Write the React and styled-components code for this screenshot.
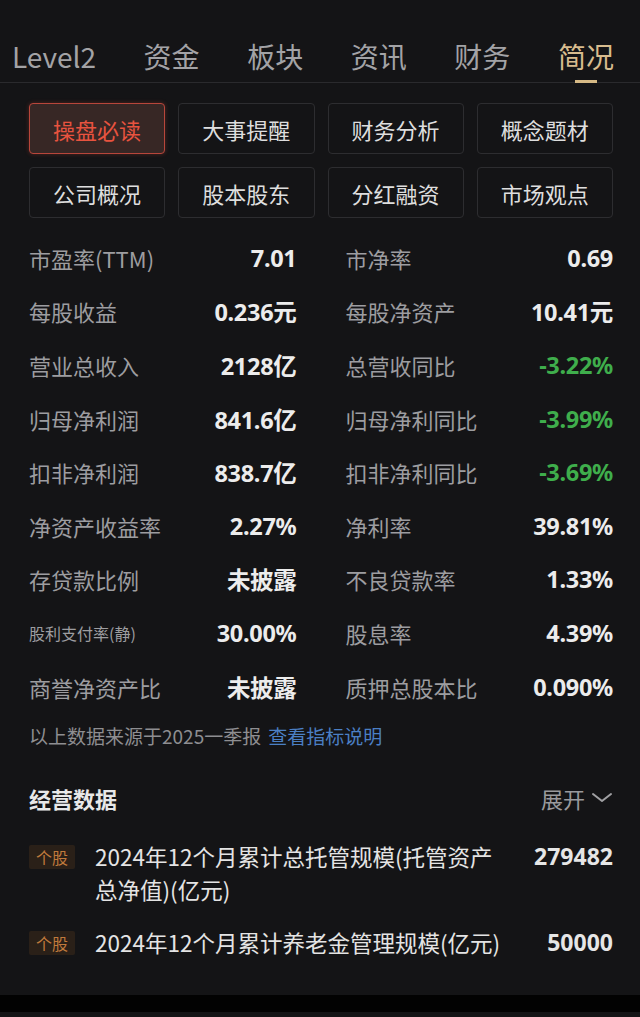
import styled, { createGlobalStyle } from "styled-components";

const Global = createGlobalStyle`
    html, body {
        margin: 0;
        padding: 0;
        background: #141416;
    }
    body {
        font-family: "Noto Sans CJK SC", "Noto Sans", sans-serif;
        color: #e6e6e6;
    }
`;

const Page = styled.div`
    width: 640px;
    height: 1017px;
    background: #141416;
    display: flex;
    flex-direction: column;
    overflow: hidden;
`;

const Tabs = styled.div`
    height: 83px;
    padding: 0 26px 0 12px;
    display: flex;
    justify-content: space-between;
    align-items: flex-start;
    border-bottom: 1px solid #2a2a2d;
    box-sizing: border-box;
`;

const Tab = styled.div`
    position: relative;
    height: 83px;
    padding-top: 37px;
    box-sizing: border-box;
    font-size: 28px;
    line-height: 38px;
    color: ${(p) => (p.$active ? "#d8bc8e" : "#a3a3a6")};

    &::after {
        content: "";
        display: ${(p) => (p.$active ? "block" : "none")};
        position: absolute;
        left: 50%;
        bottom: 0;
        width: 22px;
        height: 3px;
        margin-left: -11px;
        background: #d6b985;
    }
`;

const Body = styled.div`
    padding: 20px 27px 0 29px;
    display: flex;
    flex-direction: column;
    flex: 1;
`;

const Buttons = styled.div`
    display: grid;
    grid-template-columns: repeat(4, 1fr);
    gap: 13px 13px;
`;

const Btn = styled.div`
    height: 51px;
    box-sizing: border-box;
    border-radius: 4px;
    border: 1px solid ${(p) => (p.$active ? "#b8463b" : "#2d2d30")};
    background: ${(p) => (p.$active ? "#372725" : "transparent")};
    color: ${(p) => (p.$active ? "#e8533f" : "#dedede")};
    box-shadow: ${(p) => (p.$active ? "0 0 4px rgba(200,70,55,0.35)" : "none")};
    display: flex;
    align-items: center;
    justify-content: center;
    font-size: 22px;
`;

const Grid = styled.div`
    margin-top: 13px;
    display: grid;
    grid-template-columns: 1fr 1fr;
    column-gap: 49px;
`;

const Cell = styled.div`
    height: 53.6px;
    display: flex;
    align-items: center;
    justify-content: space-between;
`;

const Label = styled.span`
    color: #9d9da0;
    font-size: ${(p) => (p.$small ? "16px" : "22px")};
`;

const Value = styled.span`
    font-family: "Noto Sans", "Noto Sans CJK SC", sans-serif;
    font-weight: 700;
    font-size: 23.5px;
    letter-spacing: -0.3px;
    color: ${(p) => (p.$down ? "#3fae4c" : "#ececec")};
`;

const Note = styled.div`
    margin-top: 10px;
    font-size: 19px;
    line-height: 26px;
    color: #8e8e91;
`;

const Link = styled.span`
    color: #4b7fc4;
    margin-left: 7px;
`;

const SectionHead = styled.div`
    margin-top: 35px;
    display: flex;
    justify-content: space-between;
    align-items: center;
    height: 28px;
`;

const SectionTitle = styled.span`
    font-size: 22px;
    font-weight: 700;
    color: #e8e8e8;
`;

const Expand = styled.span`
    display: flex;
    align-items: center;
    gap: 6px;
    font-size: 22px;
    color: #9a9a9d;
`;

const Items = styled.div`
    margin-top: 28px;
    display: flex;
    flex-direction: column;
    gap: 20px;
`;

const Item = styled.div`
    display: flex;
    align-items: flex-start;
`;

const Tag = styled.span`
    flex: none;
    width: 46px;
    height: 24px;
    margin-top: 5px;
    background: #2a2018;
    color: #c07a3c;
    font-size: 16px;
    display: flex;
    align-items: center;
    justify-content: center;
    border-radius: 2px;
`;

const ItemText = styled.span`
    flex: none;
    width: 408px;
    margin-left: 20px;
    font-size: 22.5px;
    line-height: 33px;
    color: #e4e4e4;
`;

const ItemValue = styled.span`
    flex: 1;
    text-align: right;
    font-family: "Noto Sans", sans-serif;
    font-weight: 700;
    font-size: 23px;
    line-height: 33px;
    color: #e6e6e6;
`;

const BottomBar = styled.div`
    height: 17px;
    background: #020202;
    margin-bottom: 5px;
`;

const tabs = ["Level2", "资金", "板块", "资讯", "财务", "简况"];
const buttons = [
    "操盘必读", "大事提醒", "财务分析", "概念题材",
    "公司概况", "股本股东", "分红融资", "市场观点",
];
const rows = [
    ["市盈率(TTM)", "7.01", "市净率", "0.69"],
    ["每股收益", "0.236元", "每股净资产", "10.41元"],
    ["营业总收入", "2128亿", "总营收同比", "-3.22%"],
    ["归母净利润", "841.6亿", "归母净利同比", "-3.99%"],
    ["扣非净利润", "838.7亿", "扣非净利同比", "-3.69%"],
    ["净资产收益率", "2.27%", "净利率", "39.81%"],
    ["存贷款比例", "未披露", "不良贷款率", "1.33%"],
    ["股利支付率(静)", "30.00%", "股息率", "4.39%"],
    ["商誉净资产比", "未披露", "质押总股本比", "0.090%"],
];

const Chevron = () => (
    <svg width="22" height="12" viewBox="0 0 22 12" fill="none">
        <path d="M2 2l9 7 9-7" stroke="#a0a0a3" strokeWidth="2" strokeLinecap="round" strokeLinejoin="round" />
    </svg>
);

const App = () => {
    return (
        <Page>
            <Global />
            <Tabs>
                {tabs.map((t, i) => (
                    <Tab key={t} $active={i === tabs.length - 1}>{t}</Tab>
                ))}
            </Tabs>
            <Body>
                <Buttons>
                    {buttons.map((b, i) => (
                        <Btn key={b} $active={i === 0}>{b}</Btn>
                    ))}
                </Buttons>
                <Grid>
                    {rows.map((r) => [
                        <Cell key={r[0]}>
                            <Label $small={r[0].includes("(静)")}>{r[0]}</Label>
                            <Value>{r[1]}</Value>
                        </Cell>,
                        <Cell key={r[2]}>
                            <Label>{r[2]}</Label>
                            <Value $down={r[3].startsWith("-")}>{r[3]}</Value>
                        </Cell>,
                    ])}
                </Grid>
                <Note>
                    以上数据来源于2025一季报<Link>查看指标说明</Link>
                </Note>
                <SectionHead>
                    <SectionTitle>经营数据</SectionTitle>
                    <Expand>展开 <Chevron /></Expand>
                </SectionHead>
                <Items>
                    <Item>
                        <Tag>个股</Tag>
                        <ItemText>2024年12个月累计总托管规模(托管资产总净值)(亿元)</ItemText>
                        <ItemValue>279482</ItemValue>
                    </Item>
                    <Item>
                        <Tag>个股</Tag>
                        <ItemText>2024年12个月累计养老金管理规模(亿元)</ItemText>
                        <ItemValue>50000</ItemValue>
                    </Item>
                </Items>
            </Body>
            <BottomBar />
        </Page>
    );
};

export default App;
